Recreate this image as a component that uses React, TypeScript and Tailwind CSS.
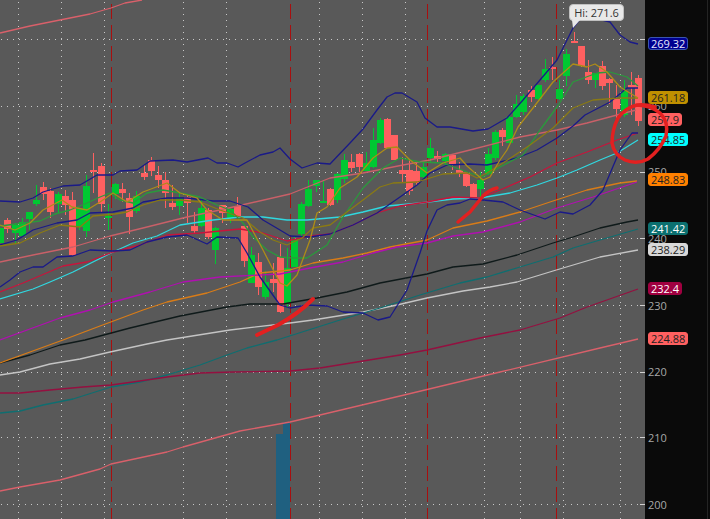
type Pt = [number, number];

// [green?, bodyTop, bodyBottom, wickTop, wickBottom] in chart pixels
const candles: [number, number, number, number, number][] = [
  [1, 228, 243, 228, 243], [0, 220, 229, 218, 233], [1, 225, 233, 223, 243], [1, 222, 236, 218, 237],
  [1, 212, 219, 212, 230], [1, 200, 204, 185, 206], [0, 187, 194, 182, 200], [0, 191, 212, 188, 218],
  [1, 194, 204, 192, 213], [0, 196, 205, 190, 215], [0, 200, 255, 192, 256], [1, 209, 227, 208, 230],
  [1, 186, 231, 175, 237], [0, 170, 172, 153, 193], [0, 166, 204, 163, 213], [1, 216, 218, 204, 230],
  [1, 184, 194, 183, 199], [0, 189, 193, 183, 202], [0, 198, 217, 193, 234], [1, 196, 211, 191, 213],
  [0, 173, 177, 165, 180], [0, 160, 171, 157, 176], [0, 175, 180, 166, 188], [0, 180, 193, 172, 208],
  [0, 203, 207, 185, 210], [1, 198, 206, 193, 215], [0, 197, 203, 195, 223], [0, 226, 231, 212, 233],
  [1, 208, 226, 200, 227], [0, 210, 237, 208, 239], [1, 228, 250, 227, 264], [0, 205, 213, 205, 223],
  [1, 209, 218, 208, 223], [0, 206, 216, 197, 218], [0, 226, 261, 225, 267], [1, 255, 283, 247, 283],
  [0, 262, 287, 253, 295], [1, 282, 297, 271, 299], [0, 279, 283, 263, 292], [0, 257, 312, 244, 313],
  [1, 268, 303, 248, 308], [1, 239, 267, 237, 267], [1, 204, 234, 202, 237], [1, 189, 206, 180, 207],
  [1, 180, 186, 180, 192], [1, 201, 203, 180, 203], [0, 189, 205, 188, 206], [1, 174, 200, 173, 203],
  [1, 160, 179, 154, 183], [0, 162, 168, 154, 172], [0, 154, 167, 153, 172], [1, 163, 171, 152, 171],
  [1, 140, 167, 128, 168], [1, 120, 143, 118, 144], [0, 119, 148, 118, 148], [0, 135, 160, 135, 160],
  [0, 170, 174, 157, 183], [0, 170, 191, 160, 195], [0, 171, 183, 163, 185], [1, 167, 177, 162, 178],
  [1, 148, 158, 138, 163], [0, 156, 159, 151, 163], [1, 154, 161, 153, 165], [0, 155, 164, 154, 170],
  [0, 170, 173, 162, 177], [0, 172, 186, 172, 187], [0, 184, 197, 183, 198], [1, 180, 189, 172, 200],
  [1, 154, 174, 148, 175], [1, 132, 158, 130, 160], [0, 130, 137, 128, 146], [1, 117, 143, 116, 143],
  [1, 104, 117, 95, 118], [1, 96, 112, 94, 115], [0, 90, 97, 86, 102], [1, 85, 99, 85, 100],
  [1, 69, 80, 59, 82], [0, 67, 69, 57, 80], [1, 89, 99, 80, 100], [1, 54, 76, 49, 86],
  [0, 41, 43, 32, 43], [0, 46, 66, 46, 67], [0, 72, 80, 60, 84], [1, 73, 80, 73, 88],
  [0, 66, 86, 61, 90], [0, 79, 83, 78, 104], [0, 99, 109, 85, 120], [1, 91, 115, 80, 117],
  [0, 85, 88, 72, 115], [0, 78, 121, 75, 126],
];

const studies: { color: string; pts: Pt[] }[] = [
  { color: "#d9606a", pts: [[0, 33], [30, 26], [60, 20], [90, 14], [111, 8], [125, 3], [142, 0]] },
  { color: "#d9606a", pts: [[0, 491], [20, 487], [60, 480], [100, 469], [111, 464], [167, 452], [183, 447], [240, 431], [290, 422], [320, 415], [400, 396], [500, 372], [600, 348], [638, 339]] },
  { color: "#c96068", pts: [[0, 262], [33, 255], [73, 247], [110, 236], [143, 228], [187, 217], [220, 210], [290, 194], [330, 178], [363, 173], [403, 165], [430, 160], [470, 150], [520, 137], [557, 130], [587, 123], [617, 115], [636, 110]] },
  { color: "#0f1a1a", pts: [[0, 363], [30, 355], [60, 345], [85, 340], [130, 328], [180, 316], [227, 307], [250, 304], [283, 304], [317, 298], [347, 292], [380, 283], [427, 274], [453, 267], [483, 264], [517, 255], [553, 243], [573, 237], [600, 228], [627, 222], [638, 220]] },
  { color: "#c4c4c4", pts: [[0, 375], [20, 372], [50, 364], [80, 359], [110, 352], [147, 344], [167, 340], [230, 330], [290, 323], [313, 320], [363, 312], [397, 305], [427, 298], [463, 291], [490, 287], [517, 282], [553, 271], [600, 257], [638, 250]] },
  { color: "#0f6e70", pts: [[0, 413], [20, 411], [43, 405], [73, 399], [111, 387], [140, 382], [167, 375], [200, 365], [227, 355], [247, 348], [277, 340], [340, 320], [380, 308], [420, 295], [460, 283], [487, 277], [520, 267], [553, 257], [573, 248], [600, 240], [638, 229]] },
  { color: "#941040", pts: [[0, 393], [20, 393], [50, 390], [83, 387], [111, 385], [133, 382], [167, 377], [200, 373], [233, 372], [290, 371], [320, 368], [400, 355], [427, 350], [480, 338], [520, 330], [560, 318], [587, 307], [638, 289]] },
  { color: "#d87c18", pts: [[0, 363], [30, 352], [63, 340], [100, 326], [143, 310], [167, 302], [207, 293], [240, 282], [260, 273], [290, 270], [313, 263], [343, 258], [367, 253], [390, 247], [427, 240], [453, 228], [487, 221], [520, 212], [553, 201], [587, 190], [620, 183], [637, 181]] },
  { color: "#b010b0", pts: [[0, 340], [60, 318], [90, 310], [113, 302], [150, 292], [183, 282], [220, 277], [280, 274], [310, 268], [343, 262], [373, 253], [397, 247], [427, 243], [453, 236], [483, 232], [520, 222], [557, 208], [593, 197], [637, 182]] },
  { color: "#30d8e0", pts: [[0, 299], [33, 289], [50, 282], [73, 272], [93, 262], [113, 252], [133, 243], [157, 236], [180, 225], [213, 220], [240, 217], [263, 217], [287, 220], [307, 220], [340, 217], [363, 212], [387, 206], [420, 203], [453, 199], [480, 198], [510, 193], [537, 185], [557, 178], [577, 170], [600, 160], [617, 153], [638, 140]] },
  { color: "#c8143c", pts: [[0, 292], [23, 283], [63, 266], [87, 262], [113, 252], [140, 245], [167, 235], [200, 233], [240, 229], [263, 233], [287, 241], [310, 236], [330, 234], [353, 225], [377, 213], [400, 206], [427, 202], [453, 197], [480, 198], [500, 190], [530, 177], [557, 163], [587, 152], [617, 140], [638, 133]] },
  { color: "#1a1a88", pts: [[0, 201], [20, 202], [33, 198], [43, 192], [63, 186], [80, 185], [97, 175], [113, 175], [120, 171], [137, 170], [150, 161], [173, 160], [187, 162], [208, 158], [217, 163], [227, 163], [238, 167], [245, 163], [260, 155], [273, 152], [280, 148], [290, 159], [302, 168], [317, 163], [330, 164], [350, 143], [363, 129], [377, 110], [387, 97], [395, 93], [402, 93], [417, 102], [425, 118], [437, 127], [450, 127], [473, 131], [488, 129], [500, 122], [507, 118], [523, 100], [540, 80], [557, 60], [573, 28], [580, 19], [590, 17], [610, 22], [620, 35], [630, 42], [638, 44]] },
  { color: "#1a1a88", pts: [[0, 245], [17, 240], [33, 230], [57, 223], [77, 220], [90, 213], [113, 212], [133, 208], [143, 202], [167, 198], [187, 198], [213, 201], [230, 201], [248, 207], [263, 220], [280, 230], [290, 236], [310, 237], [330, 234], [353, 225], [377, 213], [400, 197], [417, 185], [430, 173], [447, 165], [470, 164], [487, 165], [517, 158], [537, 150], [557, 138], [573, 126], [585, 115], [610, 102], [627, 88], [638, 88]] },
  { color: "#1a1a88", pts: [[0, 287], [10, 280], [20, 272], [33, 267], [43, 267], [57, 257], [73, 256], [90, 250], [113, 251], [130, 250], [147, 242], [167, 237], [187, 235], [207, 244], [217, 237], [238, 238], [247, 253], [260, 277], [280, 305], [290, 308], [307, 305], [327, 306], [343, 312], [363, 313], [378, 320], [390, 317], [407, 290], [420, 253], [427, 231], [437, 210], [447, 205], [460, 203], [470, 199], [483, 200], [503, 202], [520, 210], [545, 219], [560, 212], [573, 214], [590, 205], [603, 190], [620, 150], [632, 133], [638, 133]] },
  { color: "#2a9a3c", pts: [[0, 226], [40, 221], [55, 214], [70, 210], [87, 203], [100, 197], [110, 193], [120, 200], [133, 203], [147, 193], [163, 190], [180, 193], [200, 197], [217, 205], [230, 210], [243, 223], [253, 237], [267, 250], [280, 257], [292, 258], [307, 258], [327, 245], [343, 217], [363, 188], [383, 168], [400, 158], [420, 162], [443, 163], [467, 172], [483, 177], [500, 167], [523, 155], [540, 130], [557, 107], [573, 82], [597, 73], [610, 72], [627, 77], [638, 86]] },
  { color: "#8a7a14", pts: [[0, 246], [20, 243], [40, 233], [60, 225], [80, 227], [93, 216], [115, 214], [127, 212], [143, 205], [160, 200], [180, 200], [200, 202], [220, 210], [243, 218], [260, 232], [273, 240], [287, 245], [302, 238], [313, 228], [330, 225], [343, 215], [363, 200], [380, 187], [393, 183], [417, 182], [443, 174], [467, 173], [477, 178], [487, 173], [503, 163], [530, 145], [553, 128], [573, 108], [593, 100], [620, 98], [638, 98]] },
  { color: "#ad8c18", pts: [[0, 225], [15, 230], [30, 223], [43, 210], [62, 200], [72, 207], [87, 210], [100, 202], [113, 193], [127, 202], [143, 192], [167, 183], [180, 193], [197, 198], [207, 210], [223, 220], [247, 220], [263, 250], [280, 283], [287, 286], [297, 275], [310, 240], [317, 213], [327, 207], [340, 188], [357, 177], [373, 158], [387, 148], [397, 147], [410, 160], [427, 173], [443, 163], [460, 158], [467, 166], [483, 180], [490, 177], [500, 160], [507, 150], [518, 127], [533, 108], [553, 82], [573, 64], [587, 67], [595, 64], [607, 72], [620, 87], [638, 98]] },
];

const gridY = [39, 106, 172, 238, 305, 372, 437, 504];
const gridX = [18, 61, 104, 183, 226, 319, 362, 405, 484, 520, 563, 620];
const sessionX = [111, 290, 427, 556];

const axisLabels: [string, number][] = [["260", 106], ["250", 172], ["240", 239], ["230", 306], ["220", 372], ["210", 438], ["200", 505]];

const badges: { label: string; y: number; cls: string }[] = [
  { label: "269.32", y: 43, cls: "bg-[#000090] border-[#3a55b0] text-[#e8e8ff]" },
  { label: "261.18", y: 97, cls: "bg-[#c09000] border-[#c09000] text-[#222]" },
  { label: "257.9", y: 119, cls: "bg-[#ff6060] border-[#ff6060] text-[#222]" },
  { label: "254.85", y: 139, cls: "bg-[#00ffff] border-[#00ffff] text-[#222]" },
  { label: "248.83", y: 179, cls: "bg-[#ff8000] border-[#ff8000] text-[#222]" },
  { label: "241.42", y: 228, cls: "bg-[#0b7070] border-[#0b7070] text-white" },
  { label: "238.29", y: 249, cls: "bg-[#d8d8d8] border-[#d8d8d8] text-[#222]" },
  { label: "232.4", y: 288, cls: "bg-[#a00040] border-[#a00040] text-white" },
  { label: "224.88", y: 338, cls: "bg-[#ff6060] border-[#ff6060] text-[#222]" },
];

const line = (pts: Pt[]) => pts.map((p) => p.join(",")).join(" ");

function Chart() {
  return (
    <svg width={645} height={519} className="block">
      {gridY.map((y) => (
        <line key={y} x1={1} x2={645} y1={y + 0.5} y2={y + 0.5} stroke="#c8c8c8" strokeDasharray="1 5" />
      ))}
      {gridX.map((x) => (
        <line key={x} x1={x + 0.5} x2={x + 0.5} y1={2} y2={519} stroke="#c8c8c8" strokeDasharray="1 5" />
      ))}
      {gridY.map((y) => (
        <line key={y} x1={640} x2={645} y1={y + 0.5} y2={y + 0.5} stroke="#d0d0d0" />
      ))}
      <rect x={276} y={434} width={7} height={85} fill="#1f6080" />
      <rect x={283} y={422} width={7} height={97} fill="#1f6080" />
      {sessionX.map((x) => (
        <line key={x} x1={x + 0.5} x2={x + 0.5} y1={4} y2={519} stroke="#a80f0f" strokeDasharray="15 6" />
      ))}
      {candles.map(([up, top, bottom, wTop, wBottom], i) => {
        const x = Math.round(0.3 + 7.165 * i);
        const fill = up ? "#00c832" : "#ff6060";
        return (
          <g key={i} shapeRendering="crispEdges">
            <rect x={x} y={wTop} width={1} height={wBottom - wTop} fill={fill} />
            <rect x={x - 3} y={top} width={7} height={bottom - top} fill={fill} />
          </g>
        );
      })}
      {studies.map((s, i) => (
        <polyline key={i} points={line(s.pts)} fill="none" stroke={s.color} strokeWidth={1.3} strokeLinejoin="round" />
      ))}
    </svg>
  );
}

export default function App() {
  return (
    <div className="relative flex w-[710px] h-[519px] overflow-hidden bg-[#0a0a0a] font-['Open_Sans',sans-serif]">
      <div className="w-[645px] shrink-0 bg-[#595959]">
        <Chart />
      </div>
      <div className="flex-1 flex justify-end pr-[2px]">
        <div className="w-px h-full bg-[#242424]" />
      </div>

      {axisLabels.map(([label, y]) => (
        <span
          key={label}
          className="absolute left-[648px] text-[11px] leading-[14px] text-[#a8a8a8]"
          style={{ top: y - 7 }}
        >
          {label}
        </span>
      ))}

      {badges.map((b) => (
        <span
          key={b.label}
          className={`absolute left-[648px] h-[13px] px-[2px] rounded-[3px] border text-[11px] leading-[11px] ${b.cls}`}
          style={{ top: b.y - 6 }}
        >
          {b.label}
        </span>
      ))}

      {/* high marker bubble */}
      <div className="absolute left-[569px] top-[4px] h-[17px] w-[55px] rounded-[4px] bg-[#e8e8e8] border border-[#c0c0c0] text-center text-[11px] leading-[15px] text-[#333]">
        Hi: 271.6
      </div>
      <svg className="absolute left-[570px] top-[20px]" width={12} height={10}>
        <polygon points="2,0 10,0 3,8" fill="#e8e8e8" />
      </svg>

      {/* hand drawn marks */}
      <svg className="absolute left-0 top-0" width={710} height={519} fill="none" stroke="#e32020" strokeLinecap="round" strokeLinejoin="round">
        <path d="M257 335 L278 325 Q298 314 313 299" strokeWidth={4} />
        <path d="M458 222 L470 212 L483 196 Q489 190 497 188" strokeWidth={3.5} />
        <path d="M655 107 Q645 104 637 105 Q625 108 618 118 Q612 130 612 143 Q614 155 625 160 Q637 165 648 159 Q660 150 666 136 Q669 122 660 113 Q652 106 637 105" strokeWidth={3.5} />
      </svg>
    </div>
  );
}
